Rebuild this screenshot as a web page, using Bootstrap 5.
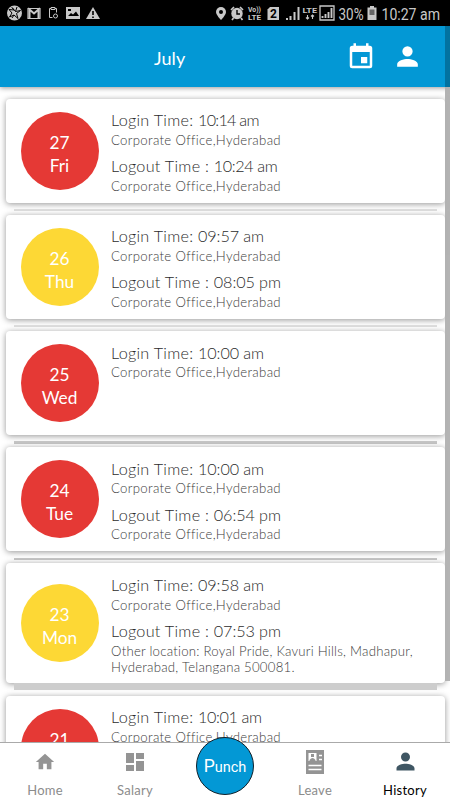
<!DOCTYPE html>
<html lang="en">
<head>
<meta charset="utf-8">
<meta name="viewport" content="width=device-width, initial-scale=1">
<title>Attendance history</title>
<link href="https://cdn.jsdelivr.net/npm/bootstrap@5.3.0/dist/css/bootstrap.min.css" rel="stylesheet">
<style>
body{font-family:Lato,sans-serif;background:#fff;height:800px;width:450px;overflow:hidden;color:#555}
svg{display:block;flex:none}
.statusbar{height:26px;background:#000;color:#c8c8c8;font-family:Roboto,sans-serif;padding:0 9px 0 7px}
.appbar{height:61px;background:#0398d5;box-shadow:0 1px 5px rgba(0,0,0,.4);z-index:3;padding:0 27px 0 154px}
.month{font-size:18px;letter-spacing:.1px;color:#fff;line-height:24px;padding-top:3px;font-weight:400}
.feed{height:655px;overflow:hidden;padding:11.6px 5px 0 6px}
.entry{min-height:104px;border-radius:4px;box-shadow:0 1px 6px rgba(0,0,0,.42);background:#fff;padding:10.6px 10px 0 14.5px;gap:12.5px}
.entry.tall{min-height:120px}
.divide{height:12.2px;padding:6.5px 8px 0}
.divide div{height:2px;background:#dedede}
.divide.mid div{height:2.6px;background:#c6c6c6}
.divide.heavy{padding-top:0}
.divide.heavy div{height:6.5px;background:#cdcdcd;position:relative}
.day{width:78px;height:78px;border-radius:50%;color:#fff;font-size:17.3px;line-height:23px;padding-top:6px;margin-top:2.4px;flex:none}
.tall .day{margin-top:10.4px}
.red{background:#e53935}.yellow{background:#fdd835}
.when{font-size:16.2px;line-height:22px;letter-spacing:.27px;font-weight:300;color:#2c2c2c;white-space:nowrap}
.when span{letter-spacing:-.1px}
.when .one{letter-spacing:-.75px}
.when .two{letter-spacing:-.4px}
.place{font-size:13.2px;line-height:16.4px;letter-spacing:.32px;font-weight:300;color:#3c3c3c;margin:.6px 0 7px}
.place.far{letter-spacing:.24px}
.thumb{width:5px;height:655px;background:#b0b0b0;position:absolute;right:0;top:26px;z-index:4;opacity:.95}
.thumb i{display:block;height:61px;background:#02709e}
.tabs{height:58px;background:#fff;border-top:1px solid #aaa;z-index:5;font-size:13px;letter-spacing:.25px;color:#8c8c8c}
.tabs>div{width:90px}
.tabs .cap{line-height:16px}
.tabs .glyph{height:39px;padding-bottom:2px}
.punch{position:absolute;left:196px;top:737px;width:58px;height:58px;border-radius:50%;background:#0398d5;border:1px solid #10202a;color:#fff;font-family:Roboto,sans-serif;z-index:6;font-size:14.5px;padding-top:1px}
.punch b{font-size:17.5px;font-weight:400}
</style>
<script src="https://cdn.jsdelivr.net/npm/bootstrap@5.3.0/dist/js/bootstrap.bundle.min.js"></script>
</head>
<body class="position-relative d-flex flex-column">
<header class="statusbar d-flex align-items-center justify-content-between flex-shrink-0">
<svg width="95" height="26" fill="#c8c8c8"><circle cx="7.500" cy="13" r="7.500"/><path d="M5 7.500l3.500 4 5-1-4 3 1.500 5-4-3.500-4.500 2 2.500-4-3-3.500 5 .5z" fill="none" stroke="#000"/><path d="M8.500 11.500L10 7M7 15l-2 3" stroke="#000"/><path d="M21 8.500h12v10H21z" fill="none" stroke="#c8c8c8" stroke-width="1.200"/><path d="M22.500 18.500v-9l4.500 4 4.500-4v9" fill="none" stroke="#c8c8c8" stroke-width="2"/><path d="M44 8.500h-1.500v9h3M49.500 12.500V8.500H48M44 7.500h4v2h-4z" fill="none" stroke="#c8c8c8"/><circle cx="48.500" cy="16" r="2" fill="none" stroke="#c8c8c8"/><path d="M59 7h14v12H59z"/><path d="M61 16l3-3 2 1.500 3-3 3 4.500z" fill="#000"/><path d="M61 9h3v2h-3z" fill="#000"/><path d="M86 7l7 12H79z"/><path d="M86 11v4M86 16.500v1.500" stroke="#000" stroke-width="1.600"/></svg>
<svg width="225" height="26" fill="#c8c8c8"><path d="M5 7a5 5 0 0 1 5 5c0 3-5 8-5 8s-5-5-5-8a5 5 0 0 1 5-5"/><circle cx="5" cy="12" r="2" fill="#000"/><circle cx="21" cy="13.500" r="5.700"/><path d="M15 10l3-3M24 7l3 3M17.500 18l-1.500 2M25 18l1.500 2" stroke="#c8c8c8" stroke-width="1.700"/><path d="M21 10v4h3" fill="none" stroke="#000" stroke-width="1.400"/><text x="32" y="12" font-size="6.500" font-weight="700" textLength="13" lengthAdjust="spacingAndGlyphs">Vo))</text><text x="32" y="20" font-size="7.500" font-weight="700" textLength="13" lengthAdjust="spacingAndGlyphs">LTE</text><path d="M54 7h9v13H51.500V9.500z"/><text x="54" y="18" font-size="12" font-weight="700" fill="#000">2</text><path d="M71 20v-2M74.500 20v-4M78.500 20v-8M82.500 20V7" stroke="#c8c8c8" stroke-width="2"/><text x="86.500" y="13" font-size="8" font-weight="700" textLength="14.500" lengthAdjust="spacingAndGlyphs">LTE</text><path d="M91.500 15v4m-1.500-1.500l1.500 1.500 1.500-1.500M96.500 19v-4m-1.500 1.500l1.500-1.500 1.500 1.500" fill="none" stroke="#c8c8c8" stroke-width="1.100"/><path d="M104 6h14v14h-14z" fill="none" stroke="#c8c8c8" stroke-width="1.300"/><path d="M106.500 18v-2M109.500 18v-4M112.500 18v-6M115.500 18V8" stroke="#c8c8c8" stroke-width="1.900"/>
<text x="122.500" y="19.500" font-size="16.500" textLength="25" lengthAdjust="spacingAndGlyphs">30%</text><path d="M154 6h4v1.500h2.500V20h-9V7.500h2.500z"/><path d="M153.500 9.500h5V15h-5z" fill="#666"/><text x="165.500" y="19.500" font-size="16.500" textLength="58.500" lengthAdjust="spacingAndGlyphs">10:27 am</text></svg>
</header>
<nav class="appbar d-flex align-items-center justify-content-between flex-shrink-0 position-relative">
<span class="month">July</span>
<div class="d-flex align-items-center gap-3"><svg width="30" height="30" viewBox="0 0 24 24" fill="#fff"><path d="M17 12h-5v5h5v-5zM16 1v2H8V1H6v2H5a2 2 0 0 0-2 2v14a2 2 0 0 0 2 2h14a2 2 0 0 0 2-2V5a2 2 0 0 0-2-2h-1V1h-2zm3 18H5V8h14v11z"/></svg><svg width="31" height="31" viewBox="0 0 24 24" fill="#fff"><path d="M12 12a4 4 0 1 0 0-8 4 4 0 0 0 0 8zm0 2c-2.700 0-8 1.300-8 4v2h16v-2c0-2.700-5.300-4-8-4z"/></svg></div>
</nav>
<main class="feed flex-shrink-0">
<article class="entry d-flex"><div class="day red text-center d-flex flex-column justify-content-center"><span>27</span><span>Fri</span></div><div><div class="when">Login Time: <span class="one">10:14 am</span></div><div class="place">Corporate Office,Hyderabad</div><div class="when">Logout Time : <span class="two">10:24 am</span></div><div class="place">Corporate Office,Hyderabad</div></div></article>
<div class="divide"><div></div></div>
<article class="entry d-flex"><div class="day yellow text-center d-flex flex-column justify-content-center"><span>26</span><span>Thu</span></div><div><div class="when">Login Time: <span>09:57 am</span></div><div class="place">Corporate Office,Hyderabad</div><div class="when">Logout Time : <span>08:05 pm</span></div><div class="place">Corporate Office,Hyderabad</div></div></article>
<div class="divide"><div></div></div>
<article class="entry d-flex"><div class="day red text-center d-flex flex-column justify-content-center"><span>25</span><span>Wed</span></div><div><div class="when">Login Time: <span>10:00 am</span></div><div class="place">Corporate Office,Hyderabad</div></div></article>
<div class="divide mid"><div></div></div>
<article class="entry d-flex"><div class="day red text-center d-flex flex-column justify-content-center"><span>24</span><span>Tue</span></div><div><div class="when">Login Time: <span>10:00 am</span></div><div class="place">Corporate Office,Hyderabad</div><div class="when">Logout Time : <span>06:54 pm</span></div><div class="place">Corporate Office,Hyderabad</div></div></article>
<div class="divide mid"><div></div></div>
<article class="entry tall d-flex"><div class="day yellow text-center d-flex flex-column justify-content-center"><span>23</span><span>Mon</span></div><div><div class="when">Login Time: <span>09:58 am</span></div><div class="place">Corporate Office,Hyderabad</div><div class="when">Logout Time : <span>07:53 pm</span></div><div class="place far">Other location: Royal Pride, Kavuri Hills, Madhapur,<br>Hyderabad, Telangana 500081.</div></div></article>
<div class="divide heavy"><div></div></div>
<article class="entry d-flex"><div class="day red text-center d-flex flex-column justify-content-center"><span>21</span><span>Sat</span></div><div><div class="when">Login Time: <span class="two">10:01 am</span></div><div class="place">Corporate Office,Hyderabad</div></div></article>
</main>
<div class="thumb"><i></i></div>
<footer class="tabs d-flex flex-shrink-0 position-relative text-center">
<div><div class="glyph d-flex justify-content-center align-items-center"><svg width="22" height="22" viewBox="0 0 24 24" fill="#949494"><path d="M10 20v-6h4v6h5v-8h3L12 3 2 12h3v8z"/></svg></div><div class="cap">Home</div></div>
<div><div class="glyph d-flex justify-content-center align-items-center"><svg width="24" height="24" viewBox="0 0 24 24" fill="#949494"><path d="M3 13h8V3H3v10zm0 8h8v-6H3v6zm10 0h8V11h-8v10zm0-18v6h8V3h-8z"/></svg></div><div class="cap">Salary</div></div>
<div></div>
<div><div class="glyph d-flex justify-content-center align-items-center"><svg width="18" height="24" fill="#949494"><path d="M0 0h18v24H0z"/><path d="M2.500 3h8v8h-8z" fill="#fff"/><path d="M3.500 10q3-4 6 0v1h-6zM5 4h3v3H5z"/><path d="M13 5.500h3M13 9.500h3M2.500 15.500h13M2.500 19.500h13" stroke="#fff" stroke-width="1.500"/></svg></div><div class="cap">Leave</div></div>
<div class="text-black"><div class="glyph d-flex justify-content-center align-items-center"><svg width="27" height="27" viewBox="0 0 24 24" fill="#3f5663"><path d="M12 12a4 4 0 1 0 0-8 4 4 0 0 0 0 8zm0 2c-2.700 0-8 1.300-8 4v2h16v-2c0-2.700-5.300-4-8-4z"/></svg></div><div class="cap">History</div></div>
</footer>
<div class="punch d-flex align-items-center justify-content-center"><span><b>P</b>unch</span></div>
</body>
</html>
